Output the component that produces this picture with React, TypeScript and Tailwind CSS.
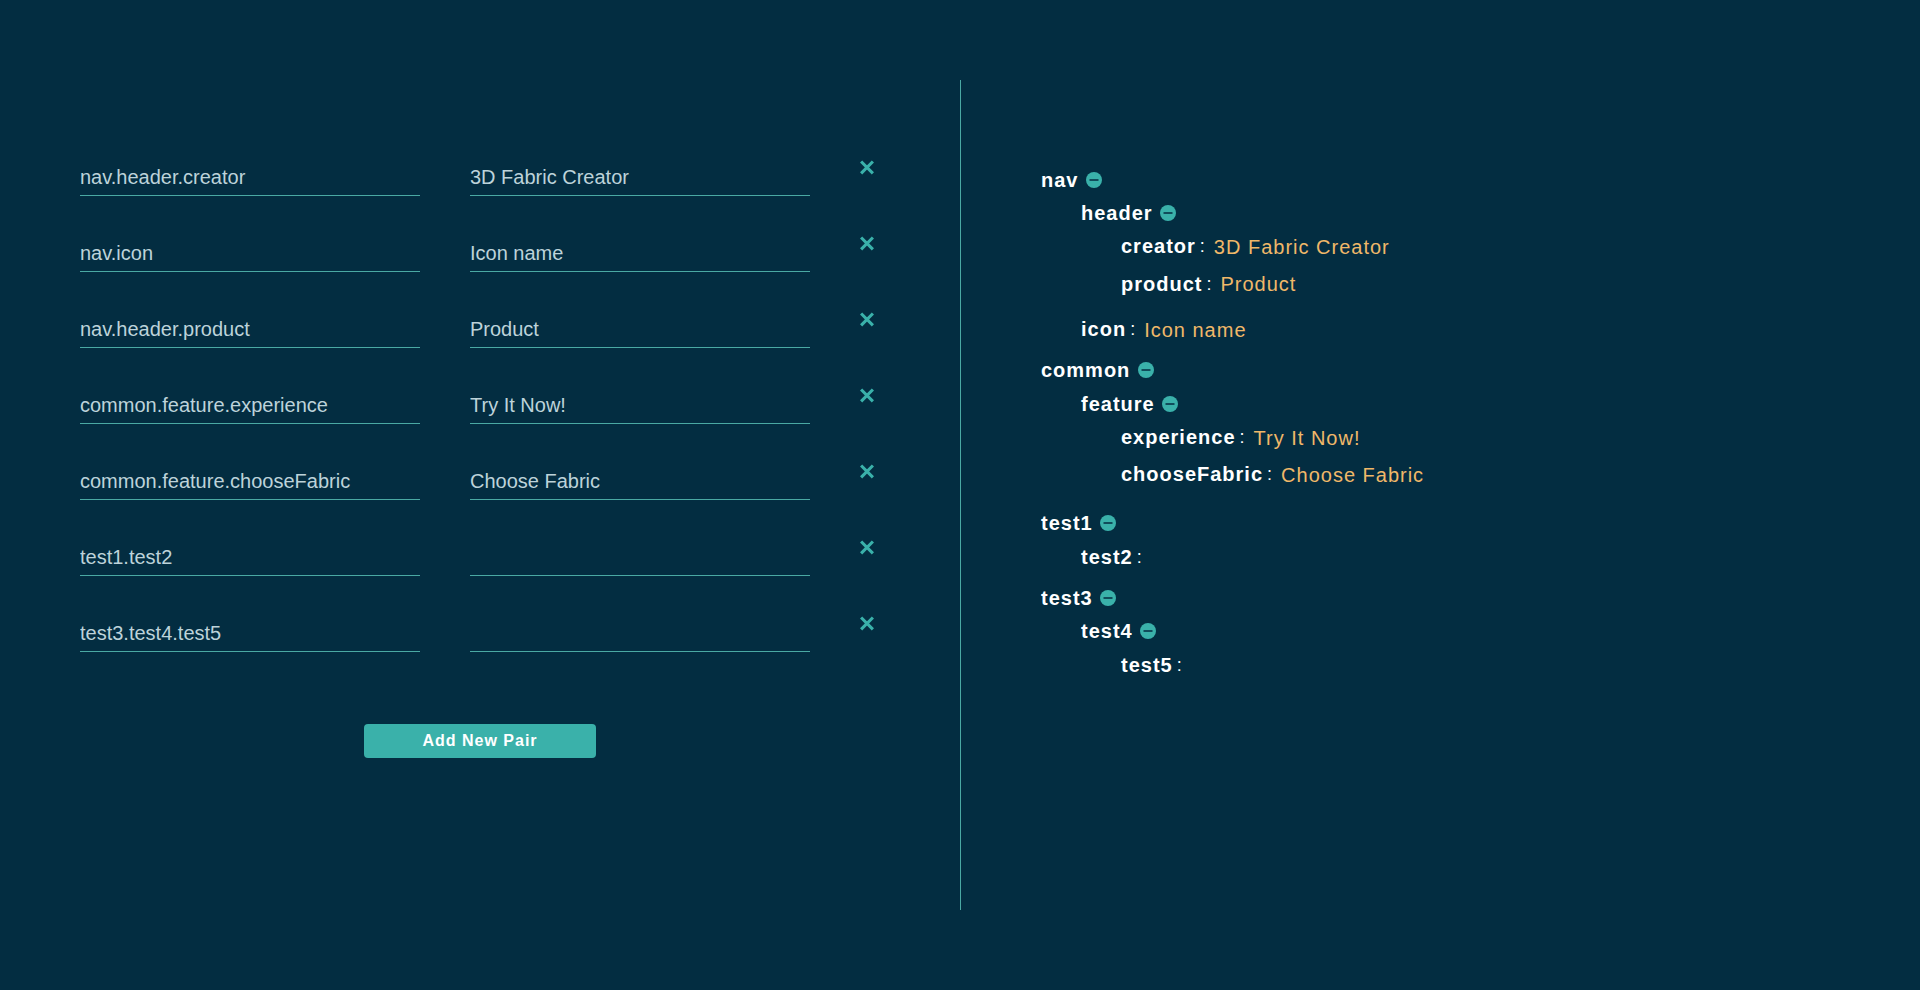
import React from "react";

type TreeNode = { name: string; gap: string; value?: string; drop?: string; children?: TreeNode[] };

const pairs = [
  ["nav.header.creator", "3D Fabric Creator"],
  ["nav.icon", "Icon name"],
  ["nav.header.product", "Product"],
  ["common.feature.experience", "Try It Now!"],
  ["common.feature.chooseFabric", "Choose Fabric"],
  ["test1.test2", ""],
  ["test3.test4.test5", ""],
];

const tree: TreeNode[] = [
  {
    name: "nav",
    gap: "",
    children: [
      {
        name: "header",
        gap: "mt-[9px]",
        children: [
          { name: "creator", gap: "mt-[9px]", value: "3D Fabric Creator", drop: "mt-px" },
          { name: "product", gap: "mt-[14px]", value: "Product" },
        ],
      },
      { name: "icon", gap: "mt-[21px]", value: "Icon name", drop: "mt-px" },
    ],
  },
  {
    name: "common",
    gap: "mt-[17px]",
    children: [
      {
        name: "feature",
        gap: "mt-[10px]",
        children: [
          { name: "experience", gap: "mt-[9px]", value: "Try It Now!", drop: "mt-px" },
          { name: "chooseFabric", gap: "mt-[13px]", value: "Choose Fabric", drop: "mt-px" },
        ],
      },
    ],
  },
  { name: "test1", gap: "mt-[25px]", children: [{ name: "test2", gap: "mt-[10px]", value: "" }] },
  {
    name: "test3",
    gap: "mt-[17px]",
    children: [{ name: "test4", gap: "mt-[9px]", children: [{ name: "test5", gap: "mt-[10px]", value: "" }] }],
  },
];

function CloseIcon() {
  return (
    <svg width="14" height="15" viewBox="0 0 14 15" fill="none" stroke="#3ab1aa" strokeWidth="3.1">
      <path d="M1.1 1.5l11.8 11.8M12.9 1.5L1.1 13.3" />
    </svg>
  );
}

function CollapseIcon() {
  return (
    <svg width="16" height="16" viewBox="0 0 16 16">
      <circle cx="8" cy="8" r="8" fill="#3ab1aa" />
      <path d="M3.5 8h9" stroke="#042d41" strokeWidth="1.5" />
    </svg>
  );
}

function Branch({ node }: { node: TreeNode }) {
  return (
    <li>
      <div className={`flex h-6 items-start whitespace-pre leading-6 ${node.gap}`}>
        <span className="font-bold text-white">{node.name}</span>
        {node.children ? (
          <button className="ml-[7.6px] mt-1">
            <CollapseIcon />
          </button>
        ) : (
          <>
            <span className="ml-1 text-[18px] text-white">:</span>
            <span className={`ml-2 text-[#f0b869] ${node.drop ?? ""}`}>{node.value}</span>
          </>
        )}
      </div>
      {node.children && (
        <ul className="pl-10">
          {node.children.map((child) => (
            <Branch key={child.name} node={child} />
          ))}
        </ul>
      )}
    </li>
  );
}

export default function App() {
  return (
    <main className="flex h-[990px] w-full bg-[#032d41] py-20 font-['Liberation_Sans',Arial,sans-serif] text-xl">
      <section className="flex w-[961px] flex-col items-center border-r border-[#4aa9a3] pt-20">
        <ul className="w-[800px]">
          {pairs.map(([key, value]) => (
            <li key={key} className="flex h-[76px] items-start">
              <input
                defaultValue={key}
                className="h-9 w-[340px] border-b border-[#4aa9a3] bg-transparent pb-px text-[#bdd3da] outline-none"
              />
              <input
                defaultValue={value}
                className="ml-[50px] h-9 w-[340px] border-b border-[#4aa9a3] bg-transparent pb-px text-[#bdd3da] outline-none"
              />
              <button className="ml-[50px]">
                <CloseIcon />
              </button>
            </li>
          ))}
        </ul>
        <button className="mt-8 h-[34px] w-[232px] rounded bg-[#3ab1aa] pb-px text-base font-bold tracking-[1px] text-white">
          Add New Pair
        </button>
      </section>
      <section className="pl-20 pt-[88px] tracking-[1px]">
        <ul>
          {tree.map((node) => (
            <Branch key={node.name} node={node} />
          ))}
        </ul>
      </section>
    </main>
  );
}
